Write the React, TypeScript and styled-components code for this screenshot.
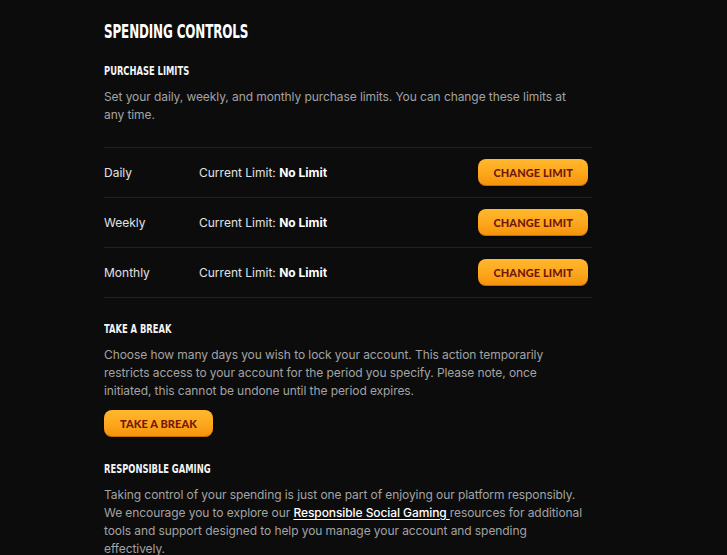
import React from 'react';
import styled, { createGlobalStyle } from 'styled-components';

type LimitRow = {
  period: string;
  limit: string;
};

const limitRows: LimitRow[] = [
  { period: 'Daily', limit: 'No Limit' },
  { period: 'Weekly', limit: 'No Limit' },
  { period: 'Monthly', limit: 'No Limit' },
];

const GlobalStyle = createGlobalStyle`
  html, body {
    margin: 0;
    padding: 0;
    background: #0c0c0d;
  }
  body {
    font-family: Inter, 'Liberation Sans', sans-serif;
    -webkit-font-smoothing: antialiased;
  }
`;

const Page = styled.div`
  min-height: 555px;
  padding: 20px 0 0 104px;
  box-sizing: border-box;
  overflow: hidden;
`;

const Panel = styled.div`
  width: 488px;
  display: flex;
  flex-direction: column;
`;

const Title = styled.h1`
  margin: 0 0 20px;
  font-family: 'DejaVu Sans Condensed', 'DejaVu Sans', sans-serif;
  font-weight: 700;
  font-size: 19px;
  line-height: 22px;
  color: #ffffff;
  letter-spacing: -0.2px;
  transform: scaleX(0.7);
  transform-origin: left center;
  white-space: nowrap;
`;

const SectionTitle = styled.h2`
  margin: 0 0 8px;
  font-family: 'DejaVu Sans Condensed', 'DejaVu Sans', sans-serif;
  font-weight: 700;
  font-size: 13px;
  line-height: 18px;
  color: #f4f4f4;
  transform: scaleX(0.715);
  transform-origin: left center;
  white-space: nowrap;
`;

const Text = styled.p`
  margin: 0;
  max-width: 481px;
  font-size: 12px;
  line-height: 18px;
  letter-spacing: -0.08px;
  color: #a3a3a3;
`;

const LimitList = styled.div`
  margin: 23px 0 22px;
  border-top: 1px solid #222223;
`;

const Row = styled.div`
  height: 49px;
  display: flex;
  align-items: center;
  border-bottom: 1px solid #222223;
  padding-right: 4px;
`;

const Period = styled.span`
  width: 95px;
  font-size: 12px;
  color: #e2e2e2;
`;

const Current = styled.span`
  flex: 1;
  font-size: 12px;
  color: #e2e2e2;

  strong {
    font-weight: 700;
    color: #ffffff;
  }
`;

const Button = styled.button<{ $wide?: boolean }>`
  height: 27px;
  padding: 0 ${({ $wide }) => ($wide ? '16px' : '15px')};
  border: none;
  border-radius: 8px;
  background: linear-gradient(180deg, #ffb82e 0%, #fda61b 55%, #f3920c 100%);
  box-shadow: inset 0 -1px 0 rgba(150, 70, 0, 0.5), 0 1px 2px rgba(0, 0, 0, 0.6);
  font-family: Lato, 'Open Sans', sans-serif;
  font-weight: 900;
  font-size: 11px;
  letter-spacing: 0.1px;
  color: #731709;
  cursor: pointer;
`;

const BreakBlock = styled.div`
  display: flex;
  flex-direction: column;
  align-items: flex-start;
  margin-bottom: 23px;

  ${Text} {
    margin-bottom: 10px;
  }
`;

const Link = styled.a`
  color: #ffffff;
  font-weight: 500;
  text-decoration: underline;
  text-underline-offset: 2px;
`;

export default function App() {
  return (
    <>
      <GlobalStyle />
      <Page>
        <Panel>
          <Title>SPENDING CONTROLS</Title>

          <SectionTitle>PURCHASE LIMITS</SectionTitle>
          <Text>
            Set your daily, weekly, and monthly purchase limits. You can change these limits at
            any time.
          </Text>

          <LimitList>
            {limitRows.map((row) => (
              <Row key={row.period}>
                <Period>{row.period}</Period>
                <Current>
                  Current Limit: <strong>{row.limit}</strong>
                </Current>
                <Button>CHANGE LIMIT</Button>
              </Row>
            ))}
          </LimitList>

          <BreakBlock>
            <SectionTitle>TAKE A BREAK</SectionTitle>
            <Text>
              Choose how many days you wish to lock your account. This action temporarily
              restricts access to your account for the period you specify. Please note, once
              initiated, this cannot be undone until the period expires.
            </Text>
            <Button $wide>TAKE A BREAK</Button>
          </BreakBlock>

          <SectionTitle>RESPONSIBLE GAMING</SectionTitle>
          <Text>
            Taking control of your spending is just one part of enjoying our platform responsibly.
            We encourage you to explore our <Link href="#">Responsible Social Gaming </Link>
            resources for additional tools and support designed to help you manage your account
            and spending effectively.
          </Text>
        </Panel>
      </Page>
    </>
  );
}
